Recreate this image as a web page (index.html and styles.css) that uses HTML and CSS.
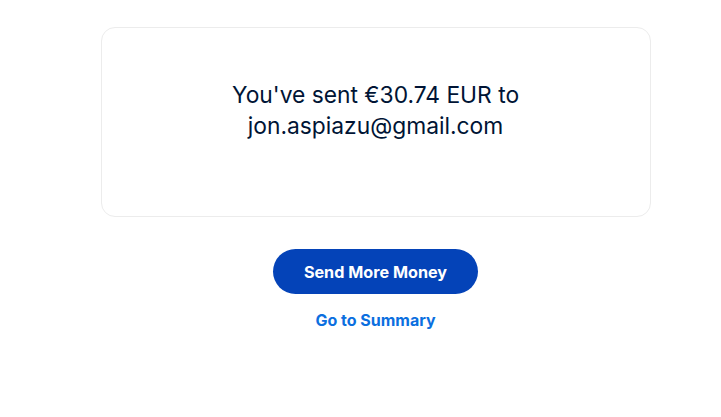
FILE: index.html
```html
<!DOCTYPE html>
<html lang="en">
<head>
<meta charset="utf-8">
<title>Sent</title>
<link rel="stylesheet" href="styles.css">
</head>
<body>
<main class="page">
  <section class="card">
    <p class="message">You've sent €30.74 EUR to<br>jon.aspiazu@gmail.com</p>
  </section>
  <div class="actions">
    <button class="primary">Send More Money</button>
    <a class="link" href="#">Go to Summary</a>
  </div>
</main>
</body>
</html>
```
FILE: styles.css
```css
html, body {
  margin: 0;
  padding: 0;
  background: #ffffff;
}
body {
  font-family: Inter, "Noto Sans", sans-serif;
  color: #001435;
}
.page {
  width: 721px;
  box-sizing: border-box;
  padding: 27px 0 0 30px;
  display: flex;
  flex-direction: column;
  align-items: center;
}
.card {
  width: 550px;
  height: 190px;
  box-sizing: border-box;
  border: 1px solid #ececec;
  border-radius: 14px;
  padding-top: 51px;
  display: flex;
  justify-content: center;
}
.message {
  margin: 0;
  font-size: 22.8px;
  line-height: 31px;
  text-align: center;
  color: #001435;
}
.actions {
  margin-top: 32px;
  display: flex;
  flex-direction: column;
  align-items: center;
}
.primary {
  width: 205px;
  height: 45px;
  border: none;
  border-radius: 23px;
  background: #0443b8;
  color: #ffffff;
  font-family: Inter, "Noto Sans", sans-serif;
  font-weight: 700;
  font-size: 16.2px;
  cursor: pointer;
}
.link {
  margin-top: 16px;
  color: #0b6fdf;
  font-weight: 700;
  font-size: 16px;
  text-decoration: none;
  line-height: 20px;
}
```
